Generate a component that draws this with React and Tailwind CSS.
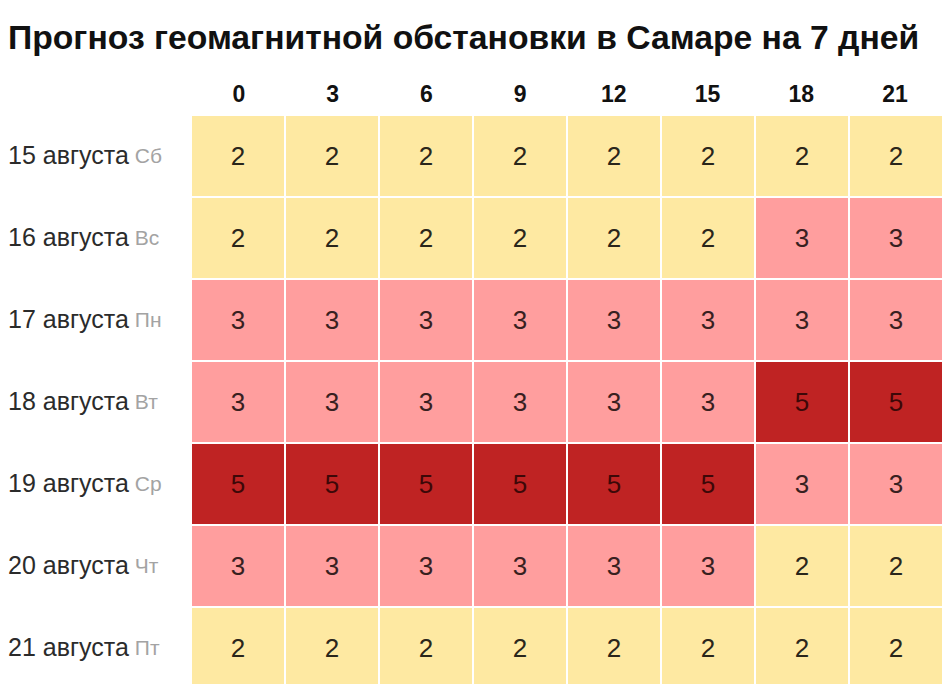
import React from "react";

const hours = [0, 3, 6, 9, 12, 15, 18, 21];

// Kp-index per day, 3-hour steps
const days = [
  { date: "15 августа", wd: "Сб", kp: [2, 2, 2, 2, 2, 2, 2, 2] },
  { date: "16 августа", wd: "Вс", kp: [2, 2, 2, 2, 2, 2, 3, 3] },
  { date: "17 августа", wd: "Пн", kp: [3, 3, 3, 3, 3, 3, 3, 3] },
  { date: "18 августа", wd: "Вт", kp: [3, 3, 3, 3, 3, 3, 5, 5] },
  { date: "19 августа", wd: "Ср", kp: [5, 5, 5, 5, 5, 5, 3, 3] },
  { date: "20 августа", wd: "Чт", kp: [3, 3, 3, 3, 3, 3, 2, 2] },
  { date: "21 августа", wd: "Пт", kp: [2, 2, 2, 2, 2, 2, 2, 2] },
];

const cellColor = {
  2: "bg-[#fee9a2] text-[#2a261b]",
  3: "bg-[#ff9e9e] text-[#382020]",
  5: "bg-[#bf2323] text-[#3d0808]",
};

export default function App() {
  return (
    <div
      className="w-[952px] h-[684px] overflow-hidden bg-white"
      style={{ fontFamily: '"Liberation Sans", Arial, sans-serif' }}
    >
      {/* Title */}
      <h1 className="pl-[8px] pt-[19px] text-[33.7px] leading-[36px] font-bold text-[#111]">
        Прогноз геомагнитной обстановки в Самаре на 7 дней
      </h1>

      {/* Hours header */}
      <div className="grid grid-cols-[192px_repeat(8,1fr)] w-[942px] h-[61px] items-center pt-[18px]">
        <div />
        {hours.map((h) => (
          <div key={h} className="text-center text-[23px] leading-[23px] font-bold text-[#111]">
            {h}
          </div>
        ))}
      </div>

      {/* Forecast grid */}
      <div className="flex flex-col gap-[2px] w-[942px]">
        {days.map((d) => (
          <div key={d.date} className="grid grid-cols-[190px_repeat(8,1fr)] gap-x-[2px] h-[80px]">
            <div className="flex items-center pl-[8px] whitespace-nowrap">
              <span className="text-[25px] text-[#2b2b2b]">{d.date}</span>
              <span className="ml-[6px] text-[21px] text-[#a3a3a3]">{d.wd}</span>
            </div>
            {d.kp.map((v, i) => (
              <div key={i} className={`flex items-center justify-center text-[26px] ${cellColor[v]}`}>
                {v}
              </div>
            ))}
          </div>
        ))}
      </div>
    </div>
  );
}
